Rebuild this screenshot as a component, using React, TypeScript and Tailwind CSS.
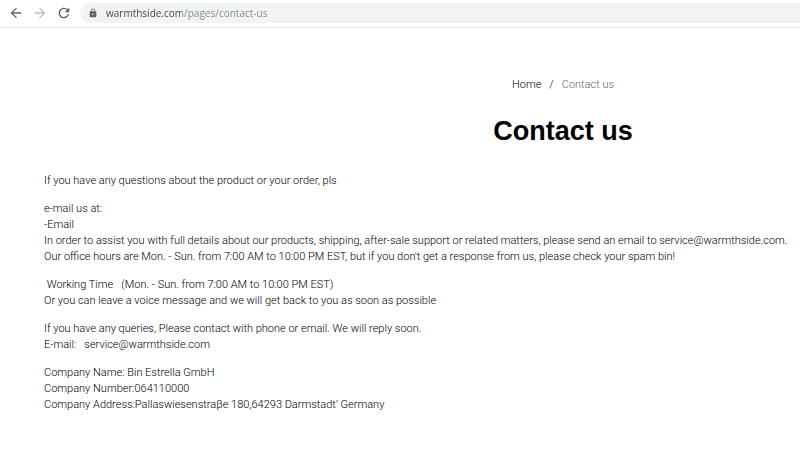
import { useState } from 'react';
import { MdArrowBack, MdArrowForward, MdLock, MdRefresh } from 'react-icons/md';

const paragraphs = [
  ['If you have any questions about the product or your order, pls'],
  [
    'e-mail us at:',
    '-Email',
    'In order to assist you with full details about our products, shipping, after-sale support or related matters, please send an email to service@warmthside.com.',
    "Our office hours are Mon. - Sun. from 7:00 AM to 10:00 PM EST, but if you don't get a response from us, please check your spam bin!",
  ],
  [
    '\u00a0Working Time\u00a0\u00a0\u00a0(Mon. - Sun. from 7:00 AM to 10:00 PM EST)',
    'Or you can leave a voice message and we will get back to you as soon as possible',
  ],
  [
    'If you have any queries, Please contact with phone or email. We will reply soon.',
    'E-mail:\u00a0\u00a0\u00a0service@warmthside.com',
  ],
  [
    'Company Name: Bin Estrella GmbH',
    'Company Number:064110000',
    'Company Address:Pallaswiesenstraβe 180,64293 Darmstadt’ Germany',
  ],
];

const BrowserBar = () => {
  const [url, setUrl] = useState('warmthside.com/pages/contact-us');

  return (
    <div className="flex h-7 items-center border-b border-[#eceef0] pb-px pl-2">
      <button type="button" aria-label="Back" className="mr-2 text-[#5f6368]">
        <MdArrowBack size={16} />
      </button>
      <button type="button" aria-label="Forward" className="mr-2 text-[#babcbe]">
        <MdArrowForward size={16} />
      </button>
      <button type="button" aria-label="Reload" className="mr-2 text-[#5f6368]">
        <MdRefresh size={16} />
      </button>
      <div className="flex h-5 flex-1 items-center gap-2 rounded-l-full bg-[#f1f3f4] pl-2">
        <MdLock size={10} className="text-[#5f6368]" />
        <input
          type="text"
          aria-label="Address"
          value={url}
          onChange={(event) => setUrl(event.target.value)}
          className="min-w-0 flex-1 bg-linear-to-r from-[#3c4043] from-[76px] to-[#80868b] to-[76px] bg-clip-text font-['Open_Sans',sans-serif] text-[10px] leading-4 font-normal text-transparent outline-none"
        />
      </div>
    </div>
  );
};

export default function App() {
  return (
    <div className="min-h-screen overflow-x-hidden bg-white font-['Roboto',sans-serif] text-[11px] leading-4 font-light text-black">
      <BrowserBar />

      <main className="min-w-[1126px] px-11 pt-12">
        <nav aria-label="Breadcrumb" className="flex justify-center gap-2 pt-px">
          <a href="#home">Home</a>
          <span>/</span>
          <span className="text-[#666]">Contact us</span>
        </nav>

        <h1 className="mt-[22px] text-center font-['Liberation_Sans',sans-serif] text-[27px] leading-8 font-bold">
          Contact us
        </h1>

        <div className="mt-[26px] flex flex-col gap-3">
          {paragraphs.map((lines) => (
            <p key={lines[0]}>
              {lines.map((line) => (
                <span key={line} className="block">
                  {line}
                </span>
              ))}
            </p>
          ))}
        </div>
      </main>
    </div>
  );
}
